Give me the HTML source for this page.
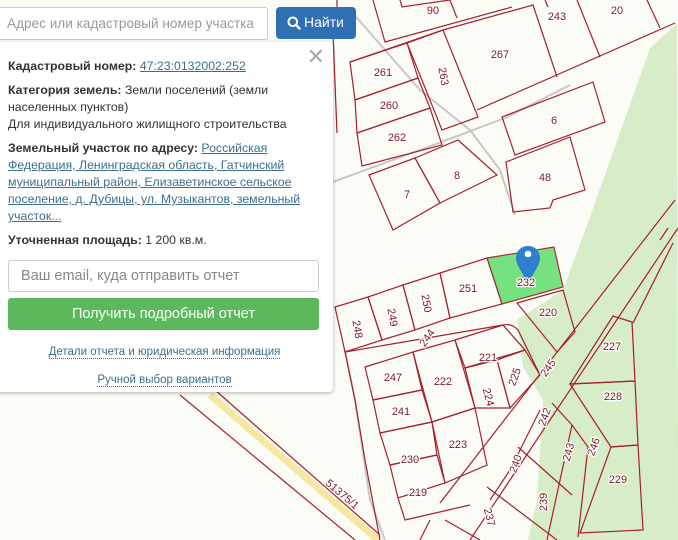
<!DOCTYPE html>
<html><head><meta charset="utf-8"><style>
*{box-sizing:border-box;margin:0;padding:0}
body{width:678px;height:540px;overflow:hidden;position:relative;background:#fcfcf7;font-family:"Liberation Sans",Arial,sans-serif;}
svg{position:absolute;left:0;top:0}
.search{position:absolute;left:-2px;top:7px;width:270px;height:33px;background:#fff;border:1px solid #ccc;border-radius:3px;font-size:13.6px;color:#999;padding:8px 0 0 8px;white-space:nowrap;overflow:hidden}
.btn{position:absolute;left:276px;top:7px;width:80px;height:32px;background:#2f70b4;border-radius:4px;color:#fff;font-size:14px;padding:7px 0 0 28px;}
.btn svg{left:11px;top:9px}
.panel{position:absolute;left:-4px;top:42px;width:337px;height:350px;background:#fff;border-radius:4px;box-shadow:0 1px 4px rgba(0,0,0,.3);font-size:12.3px;color:#333;line-height:17px;padding:16px 10px 0 12px;}
.panel b{font-weight:bold}
.panel a{color:#3b6e8f;text-decoration:underline}
.p{margin-bottom:7px}
.close{position:absolute;right:8px;top:6px;font-size:22px;color:#aaa;font-weight:300}
.email{position:absolute;left:12px;top:218px;width:311px;height:32px;border:1px solid #ccc;border-radius:3px;font-size:14.5px;color:#888;padding:7px 0 0 12px}
.go{position:absolute;left:12px;top:256px;width:311px;height:32px;background:#5cb85c;border-radius:3px;font-size:14.5px;color:#fff;text-align:center;padding-top:8px}
.l1,.l2{position:absolute;left:0;width:337px;text-align:center;font-size:11.5px;color:#3b6e8f}
.l1 span,.l2 span{border-bottom:1px dotted #3b6e8f}
.l1{top:302px}.l2{top:330px}
</style></head><body>
<svg width="678" height="540" viewBox="0 0 678 540">
<polygon points="677,23 650,48 590,217 563,290 517,320 523,367 543,400 537,500 528,540 678,540" fill="#d6edc8"/>
<g fill="none" stroke="#c8c8c8" stroke-width="2">
<path d="M350,10 L420,90 L470,130 L500,170 L515,215"/>
<path d="M330,183 L420,150 L505,118 L570,85"/>
<path d="M345,350 L355,400 L370,500 L385,540"/>
</g>
<path d="M210,395 L378,540" stroke="#f6e7a3" stroke-width="7"/>
<g fill="none" stroke="#a5202c" stroke-width="1.2">
<path d="M215,390 L380,535"/>
<path d="M180,395 L355,540"/>
<path d="M333,33 L337,133 M337,0 L337,10"/>
<path d="M373,0 L385,42 L512,7 M400,0 L402,7 L450,0 M450,0 L457,18 M545,0 L548,7"/>
<path d="M350,62 L443,30 L533,5 L557,77 M477,110 L675,23 M577,0 L600,57 M647,0 L660,28"/>
<polygon points="350,62 407,43 418,78 355,100"/>
<polygon points="355,100 418,78 430,108 357,133"/>
<polygon points="357,133 430,108 442,145 362,166"/>
<polygon points="407,43 443,30 478,117 442,130"/>
<polygon points="502,117 593,82 605,122 515,155"/>
<polygon points="506,162 570,137 585,190 553,200 550,208 513,212"/>
<polygon points="415,158 458,140 497,175 440,203"/>
<polygon points="369,175 415,158 440,203 393,230"/>
<polygon points="440,273 487,258 502,304 450,318"/>
<polygon points="403,285 440,273 450,318 415,330"/>
<polygon points="368,297 403,285 415,330 382,340"/>
<polygon points="335,307 368,297 382,340 345,352"/>
<polygon points="517,303 563,290 575,332 557,352"/>
<path d="M345,352 L503,325 Q512,323 518,330 L540,375"/>
<path d="M345,352 L355,400 L365,460 L380,540"/>
<polygon points="455,340 503,325 525,350 465,368"/>
<polygon points="365,367 413,352 422,390 373,400"/>
<polygon points="413,352 455,340 475,408 432,422"/>
<polygon points="465,368 497,360 510,408 475,408"/>
<polygon points="497,360 525,350 540,375 510,408"/>
<polygon points="373,400 422,390 432,422 380,433"/>
<polygon points="380,433 432,422 437,455 390,465"/>
<polygon points="432,422 475,408 487,465 445,483"/>
<polygon points="390,465 437,455 445,483 398,498"/>
<path d="M398,498 L405,520 L470,505"/>
<path d="M675,200 L440,503 M678,228 L470,540"/>
<path d="M633,323 L673,243"/>
<polygon points="570,384 613,316 632,322 635,381"/>
<polygon points="570,384 635,381 638,445 611,447"/>
<polygon points="611,447 638,445 643,530 580,533"/>
<path d="M552,403 L572,425 L588,447 L578,537 M572,425 L547,540 M518,447 L572,495 M487,487 L557,540 M540,410 L510,470 L490,500 M445,520 L480,540 M420,540 L430,520 M660,240 L668,228"/>
</g>
<polygon points="487,258 554,247 563,287 502,304" fill="#6ee07a" stroke="#a5202c" stroke-width="1.2" opacity=".95"/>
<path d="M528,246 C521,246 516,251 516,258 C516,266 523,272 528,285 C533,272 540,266 540,258 C540,251 535,246 528,246Z" fill="#2e80cf"/>
<circle cx="528" cy="254" r="3.3" fill="#fff"/>
<g font-family="Liberation Sans,sans-serif" font-size="11" fill="#7a1a25" text-anchor="middle" stroke="#fff" stroke-width="2.5" paint-order="stroke">
<text x="433" y="14">90</text><text x="557" y="20">243</text><text x="617" y="14">20</text>
<text x="500" y="58">267</text><text x="383" y="76">261</text><text x="389" y="109">260</text><text x="397" y="141">262</text>
<text x="554" y="124">6</text><text x="545" y="181">48</text><text x="457" y="179">8</text><text x="407" y="198">7</text>
<text x="526" y="286">232</text><text x="468" y="292">251</text><text x="548" y="316">220</text><text x="488" y="361">221</text>
<text x="393" y="381">247</text><text x="443" y="385">222</text><text x="401" y="415">241</text><text x="410" y="463">230</text>
<text x="458" y="448">223</text><text x="418" y="496">219</text><text x="612" y="350">227</text><text x="613" y="400">228</text><text x="618" y="483">229</text>
<text transform="translate(440,77) rotate(80)">263</text>
<text transform="translate(423,304) rotate(80)">250</text>
<text transform="translate(389,318) rotate(80)">249</text>
<text transform="translate(354,330) rotate(80)">248</text>
<text transform="translate(430,340) rotate(-55)">244</text>
<text transform="translate(551,370) rotate(-55)">245</text>
<text transform="translate(518,378) rotate(-70)">225</text>
<text transform="translate(485,398) rotate(75)">224</text>
<text transform="translate(548,418) rotate(-70)">242</text>
<text transform="translate(572,453) rotate(-75)">243</text>
<text transform="translate(597,448) rotate(-70)">246</text>
<text transform="translate(519,465) rotate(-70)">240</text>
<text transform="translate(547,502) rotate(-90)">239</text>
<text transform="translate(486,518) rotate(75)">237</text>
<text transform="translate(340,497) rotate(40)">51375/1</text>
</g>
</svg>
<div class="search">Адрес или кадастровый номер участка</div>
<div class="btn"><svg width="14" height="14" viewBox="0 0 14 14"><circle cx="5.8" cy="5.8" r="4.3" fill="none" stroke="#fff" stroke-width="2"/><path d="M9,9 L12.5,12.5" stroke="#fff" stroke-width="2.4" stroke-linecap="round"/></svg>Найти</div>
<div class="panel">
<div class="close">✕</div>
<div class="p"><b>Кадастровый номер:</b> <a>47:23:0132002:252</a></div>
<div class="p"><b>Категория земель:</b> Земли поселений (земли населенных пунктов)<br>Для индивидуального жилищного строительства</div>
<div class="p"><b>Земельный участок по адресу:</b> <a>Российская Федерация, Ленинградская область, Гатчинский муниципальный район, Елизаветинское сельское поселение, д. Дубицы, ул. Музыкантов, земельный участок...</a></div>
<div class="p"><b>Уточненная площадь:</b> 1 200 кв.м.</div>
<div class="email">Ваш email, куда отправить отчет</div>
<div class="go">Получить подробный отчет</div>
<div class="l1"><span>Детали отчета и юридическая информация</span></div>
<div class="l2"><span>Ручной выбор вариантов</span></div>
</div>
</body></html>
